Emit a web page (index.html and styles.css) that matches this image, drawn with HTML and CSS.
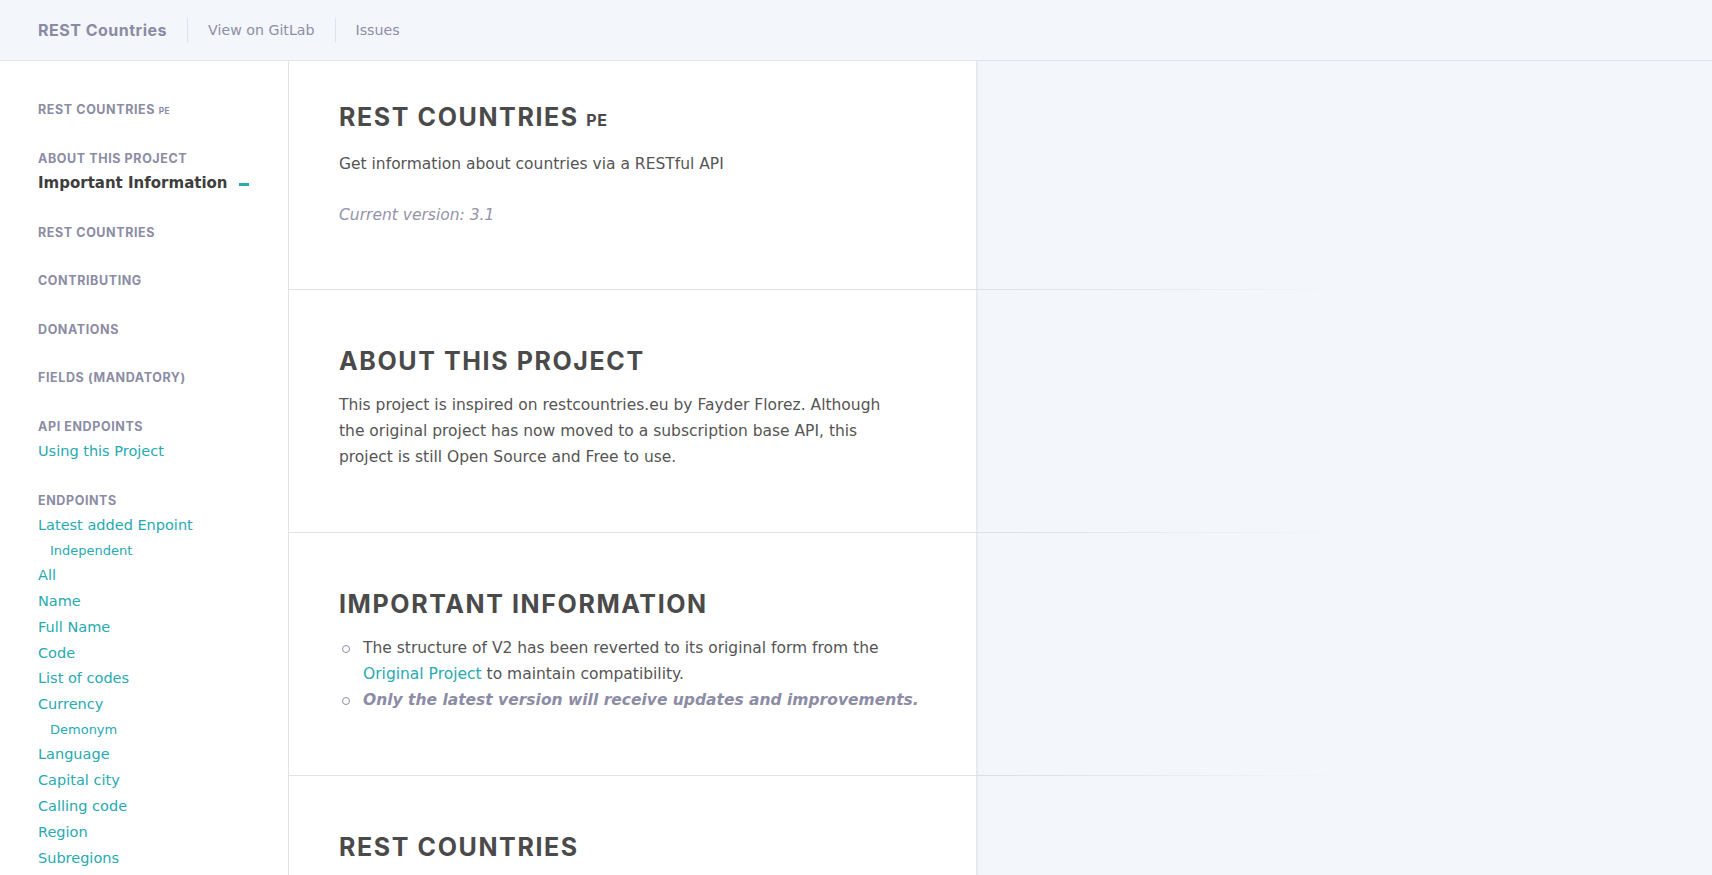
FILE: index.html
```html
<!DOCTYPE html>
<html lang="en">
<head>
<meta charset="utf-8">
<title>REST Countries</title>
<link rel="stylesheet" href="styles.css">
</head>
<body>
<header class="topbar">
  <a class="brand" href="#">REST Countries</a>
  <nav class="topnav">
    <a class="topnav-link" href="#">View on GitLab</a>
    <a class="topnav-link" href="#">Issues</a>
  </nav>
</header>
<div class="layout">
  <aside class="sidebar">
    <div class="nav-group">
      <div class="nav-heading">REST COUNTRIES <span class="nav-small">PE</span></div>
    </div>
    <div class="nav-group">
      <div class="nav-heading">ABOUT THIS PROJECT</div>
      <a class="nav-link nav-link-active" href="#">Important Information <span class="active-dash"></span></a>
    </div>
    <div class="nav-group">
      <div class="nav-heading">REST COUNTRIES</div>
    </div>
    <div class="nav-group">
      <div class="nav-heading">CONTRIBUTING</div>
    </div>
    <div class="nav-group">
      <div class="nav-heading">DONATIONS</div>
    </div>
    <div class="nav-group">
      <div class="nav-heading">FIELDS (MANDATORY)</div>
    </div>
    <div class="nav-group">
      <div class="nav-heading">API ENDPOINTS</div>
      <a class="nav-link" href="#">Using this Project</a>
    </div>
    <div class="nav-group">
      <div class="nav-heading">ENDPOINTS</div>
      <a class="nav-link" href="#">Latest added Enpoint</a>
      <a class="nav-link nav-sub" href="#">Independent</a>
      <a class="nav-link" href="#">All</a>
      <a class="nav-link" href="#">Name</a>
      <a class="nav-link" href="#">Full Name</a>
      <a class="nav-link" href="#">Code</a>
      <a class="nav-link" href="#">List of codes</a>
      <a class="nav-link" href="#">Currency</a>
      <a class="nav-link nav-sub" href="#">Demonym</a>
      <a class="nav-link" href="#">Language</a>
      <a class="nav-link" href="#">Capital city</a>
      <a class="nav-link" href="#">Calling code</a>
      <a class="nav-link" href="#">Region</a>
      <a class="nav-link" href="#">Subregions</a>
    </div>
  </aside>
  <main class="doc">
    <section class="row row-first">
      <div class="content">
        <h1 class="title">REST COUNTRIES <span class="title-small">PE</span></h1>
        <p class="text">Get information about countries via a RESTful API</p>
        <p class="text text-muted">Current version: 3.1</p>
      </div>
      <div class="aside-panel"></div>
    </section>
    <section class="row">
      <div class="content">
        <h2 class="title">ABOUT THIS PROJECT</h2>
        <p class="text text-narrow">This project is inspired on restcountries.eu by Fayder Florez. Although the original project has now moved to a subscription base API, this project is still Open Source and Free to use.</p>
      </div>
      <div class="aside-panel"></div>
    </section>
    <section class="row">
      <div class="content">
        <h2 class="title">IMPORTANT INFORMATION</h2>
        <ul class="bullets">
          <li class="bullet"><span class="bullet-text">The structure of V2 has been reverted to its original form from the <a class="link" href="#">Original Project</a> to maintain compatibility.</span></li>
          <li class="bullet"><span class="bullet-text bullet-strong">Only the latest version will receive updates and improvements.</span></li>
        </ul>
      </div>
      <div class="aside-panel"></div>
    </section>
    <section class="row row-last">
      <div class="content">
        <h2 class="title">REST COUNTRIES</h2>
      </div>
      <div class="aside-panel"></div>
    </section>
  </main>
</div>
</body>
</html>
```

FILE: styles.css
```css
* { box-sizing: border-box; }

html, body {
  margin: 0;
  padding: 0;
}

body {
  font-family: "DejaVu Sans", Verdana, sans-serif;
  color: #555;
  background: #fff;
}

a { text-decoration: none; }

.topbar {
  height: 61px;
  display: flex;
  align-items: center;
  padding-left: 38px;
  background: #f3f6fa;
  border-bottom: 1px solid #e1e4ea;
}

.brand {
  font-family: "Inter", "Noto Sans", sans-serif;
  font-weight: 700;
  font-size: 16px;
  letter-spacing: 0.5px;
  color: #8a8aa3;
  padding-right: 20px;
}

.topnav {
  display: flex;
  align-items: center;
}

.topnav-link {
  font-size: 14.2px;
  color: #8e8ea6;
  border-left: 1px solid #dfe2e8;
  padding: 0 20px;
  line-height: 25px;
}

.layout {
  display: flex;
  align-items: stretch;
}

.sidebar {
  width: 289px;
  flex: none;
  border-right: 1px solid #e3e3e6;
  padding: 36px 0 40px 38px;
  display: flex;
  flex-direction: column;
  gap: 23.5px;
}

.nav-group {
  display: flex;
  flex-direction: column;
}

.nav-heading {
  font-family: "Inter", "Noto Sans", sans-serif;
  font-weight: 700;
  font-size: 12.5px;
  line-height: 25px;
  height: 25px;
  color: #8c8ca5;
  letter-spacing: 0.6px;
}

.nav-small {
  font-size: 8.5px;
  letter-spacing: 0.3px;
  line-height: 1;
}

.nav-link {
  font-size: 14.5px;
  line-height: 25.85px;
  color: #27aab0;
}

.nav-link-active {
  font-weight: 700;
  font-size: 15px;
  line-height: 25.5px;
  color: #3e3e3e;
  display: flex;
  align-items: center;
}

.active-dash {
  display: inline-block;
  width: 10px;
  height: 3px;
  background: #27aab0;
  margin-left: 11px;
  margin-top: 2px;
}

.nav-sub {
  font-size: 13px;
  line-height: 24.3px;
  padding-left: 12px;
}

.doc {
  flex: 1;
  min-width: 0;
}

.row {
  display: flex;
}

.content {
  width: 687px;
  flex: none;
  background: #fff;
  border-bottom: 1px solid #e2e2e2;
  padding: 56px 46px 62px 50px;
}

.row-first .content {
  padding-top: 41px;
  padding-bottom: 61px;
}

.row-last .content {
  padding-bottom: 120px;
}

.aside-panel {
  flex: 1;
  background:
    linear-gradient(to right, #dcdfe4, rgba(243, 246, 250, 0) 380px) left bottom / 100% 1px no-repeat,
    linear-gradient(to right, #e2e5ea, #eef1f5 2px, rgba(243, 246, 250, 0) 3px) left top / 3px 100% no-repeat,
    #f3f6fa;
}

.title {
  margin: 0 0 16px 0;
  font-family: "Inter", "Noto Sans", sans-serif;
  font-weight: 700;
  font-size: 25px;
  line-height: 30px;
  height: 30px;
  letter-spacing: 1.6px;
  color: #4a4a4a;
}

.row-first .title {
  margin-bottom: 19px;
}

.title-small {
  font-size: 16px;
  letter-spacing: 0.5px;
  line-height: 1;
}

.text {
  margin: 0;
  font-size: 15.5px;
  line-height: 26px;
  color: #555;
}

.text-narrow {
  max-width: 560px;
}

.text + .text {
  margin-top: 25px;
}

.text-muted {
  font-style: italic;
  color: #9494aa;
}

.link {
  color: #27aab0;
}

.bullets {
  list-style: none;
  margin: 0;
  padding: 0;
}

.bullet {
  display: flex;
  align-items: flex-start;
  font-size: 15.5px;
  line-height: 26px;
  color: #555;
}

.bullet::before {
  content: "";
  flex: none;
  width: 6px;
  height: 6px;
  border: 1px solid #8e8ea6;
  border-radius: 50%;
  margin: 10px 13px 0 3px;
}

.bullet-strong {
  font-weight: 700;
  font-style: italic;
  color: #8c8ca5;
}
```
